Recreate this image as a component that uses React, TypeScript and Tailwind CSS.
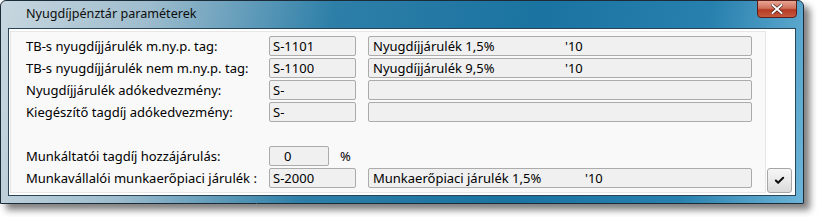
import { Check } from "lucide-react";

type Row = {
  label: string;
  code: string;
  name?: string;
  year?: string;
};

const topRows: Row[] = [
  { label: "TB-s nyugdíjjárulék m.ny.p. tag:", code: "S-1101", name: "Nyugdíjjárulék 1,5%", year: "'10" },
  { label: "TB-s nyugdíjjárulék nem m.ny.p. tag:", code: "S-1100", name: "Nyugdíjjárulék 9,5%", year: "'10" },
  { label: "Nyugdíjjárulék adókedvezmény:", code: "S-" },
  { label: "Kiegészítő tagdíj adókedvezmény:", code: "S-" },
];

const boxCls =
  "h-[20px] border border-[#ababab] rounded-[2px] bg-[#f0f0f0] flex items-center pl-[3px] text-black whitespace-nowrap";

function FieldRow({ row, last }: { row: Row; last?: boolean }) {
  return (
    <div className="flex items-center h-[20px]">
      <div className="w-[243px] whitespace-nowrap">{row.label}</div>
      <div className={`${boxCls} w-[87px]`}>{row.code}</div>
      <div className={`${boxCls} w-[384px] ml-[12px] pl-[4px]`}>
        {row.name && (
          <>
            <span className={last ? "inline-block w-[212px]" : "inline-block w-[192px]"}>{row.name}</span>
            <span>{row.year}</span>
          </>
        )}
      </div>
    </div>
  );
}

export default function App() {
  return (
    <div
      className="w-[817px] h-[217px] bg-white text-[13px] leading-none"
      style={{ fontFamily: '"Noto Sans", "Open Sans", sans-serif' }}
    >
      <div className="relative w-[804px] h-[204px] border border-[#1b2b38] rounded-t-[6px] shadow-[6px_6px_7px_rgba(0,0,0,0.5)] bg-[linear-gradient(100deg,#c8d7df_0%,#9dbccd_18%,#2d7fa8_40%,#1a73a0_65%,#2780ad_85%,#6db4d8_100%)] flex flex-col">
        {/* title bar */}
        <div className="h-[27px] flex items-center pl-[25px] text-[#0d0d0d] text-[12.6px]">
          Nyugdíjpénztár paraméterek
        </div>
        <div className="absolute top-[-1px] right-[6px] w-[40px] h-[18px] rounded-b-[4px] border border-[#5a1f1a] bg-[linear-gradient(180deg,#e8a593_0%,#d0715c_45%,#b53a22_55%,#c75a3e_100%)] flex items-center justify-center">
          <svg width="12" height="10" viewBox="0 0 12 10">
            <path d="M1.5 1 L10.5 9 M10.5 1 L1.5 9" stroke="#3a1410" strokeWidth="3.2" strokeLinecap="square" />
            <path d="M1.5 1 L10.5 9 M10.5 1 L1.5 9" stroke="#ffffff" strokeWidth="2" strokeLinecap="square" />
          </svg>
        </div>

        {/* client area */}
        <div className="mx-[7px] mb-[7px] flex-1 border border-[#27465a] bg-white flex">
          <div className="ml-[1px] mt-[2px] mb-[2px] w-[756px] border border-[#e6e6e6] bg-[#f9f9f9] pl-[15px] pt-[4px] flex flex-col gap-[2px]">
            {topRows.map((r) => (
              <FieldRow key={r.label} row={r} />
            ))}
            <div className="flex items-center h-[20px] mt-[22px]">
              <div className="w-[243px] whitespace-nowrap">Munkáltatói tagdíj hozzájárulás:</div>
              <div className={`${boxCls} w-[60px] pl-[14px]`}>0</div>
              <div className="ml-[11px]">%</div>
            </div>
            <FieldRow
              last
              row={{
                label: "Munkavállalói munkaerőpiaci járulék :",
                code: "S-2000",
                name: "Munkaerőpiaci járulék 1,5%",
                year: "'10",
              }}
            />
          </div>
          <div className="flex-1 flex items-end justify-end pr-[3px] pb-[2px]">
            <button className="w-[25px] h-[25px] border border-[#a6a6a6] rounded-[3px] bg-[linear-gradient(180deg,#f6f6f6_0%,#eaeaea_50%,#dadada_100%)] flex items-center justify-center">
              <Check size={11} strokeWidth={4.5} color="#111" />
            </button>
          </div>
        </div>
      </div>
    </div>
  );
}
